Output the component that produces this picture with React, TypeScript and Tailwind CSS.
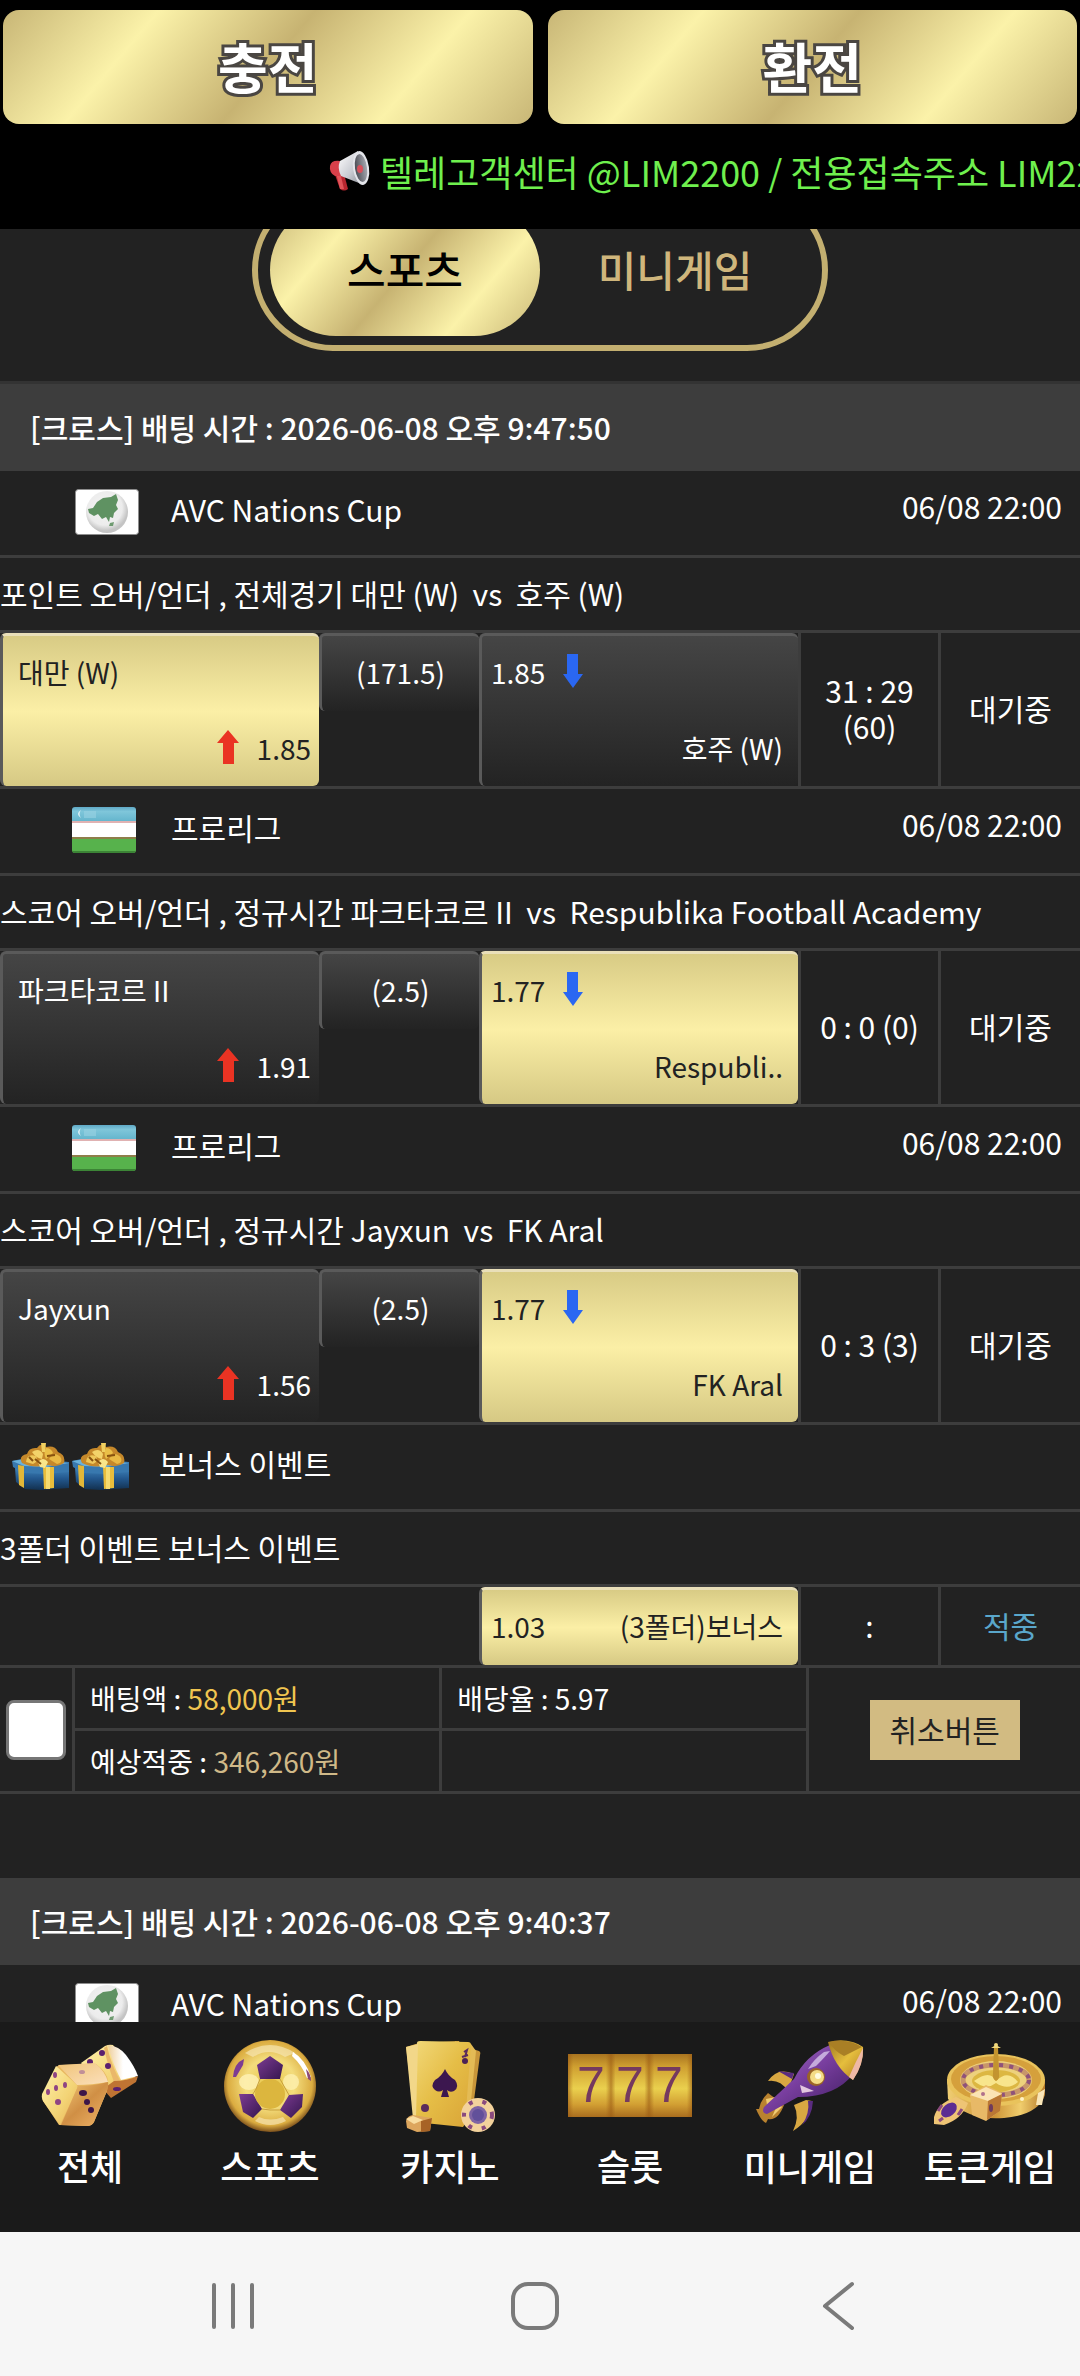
import type { ReactNode } from 'react';

const GOLD =
  'bg-[linear-gradient(130deg,#c8b676_0%,#fbf2a9_25%,#c7b372_50%,#fbf2a9_75%,#c8b676_100%)]';

function MegaphoneIcon() {
  return (
    <svg viewBox="0 0 44 42" className="h-[42px] w-11 shrink-0" aria-hidden="true">
      <defs>
        <linearGradient id="horn" x1="0" y1="0" x2="1" y2="1">
          <stop offset="0" stopColor="#ffffff" />
          <stop offset="0.55" stopColor="#c9cbd2" />
          <stop offset="1" stopColor="#85878f" />
        </linearGradient>
        <linearGradient id="bell" x1="0" y1="0" x2="1" y2="0">
          <stop offset="0" stopColor="#4c4d55" />
          <stop offset="1" stopColor="#a6a8b0" />
        </linearGradient>
      </defs>
      <path d="M6 22 L15 20 L20 39 Q16 42 12 39 Z" fill="#b8262f" />
      <path d="M8 23 L12 22 L16 39 L12 39 Z" fill="#e2545a" />
      <path d="M12 11 Q3 10 2 16 Q1 23 7 26 L13 26 Z" fill="#d8404a" />
      <path d="M12 11 L30 1 L36 35 L13 26 Q9 18 12 11 Z" fill="url(#horn)" />
      <ellipse cx="33" cy="18" rx="8" ry="17" transform="rotate(-8 33 18)" fill="#e4e5ea" />
      <ellipse cx="33" cy="18" rx="6" ry="14" transform="rotate(-8 33 18)" fill="url(#bell)" />
      <ellipse cx="32" cy="19" rx="3" ry="4" fill="#d9505b" />
    </svg>
  );
}

function AsiaFlag() {
  return (
    <svg viewBox="-3 0 67 46" className="h-[46px] w-[67px]" aria-hidden="true">
      <defs>
        <radialGradient id="globe" cx="0.45" cy="0.4" r="0.55">
          <stop offset="0" stopColor="#f4f4f4" />
          <stop offset="0.75" stopColor="#ececec" />
          <stop offset="1" stopColor="#c4c4c4" />
        </radialGradient>
      </defs>
      <rect x="0.500" y="0.500" width="63" height="45" rx="3" fill="#ffffff" stroke="#8d8d8d" />
      <circle cx="32" cy="23" r="21" fill="url(#globe)" />
      <path
        d="M13 20 L18 19 L22 13 L28 9 L36 8 L41 5 L43 11 L41 16 L43 20 L39 24 L38 29 L35 28 L34 33 L31 28 L27 30 L23 25 L19 27 L14 24 Z"
        fill="#5f9262"
      />
      <path d="M35 34 L39 33 L38 37 L34 37 Z" fill="#6f9b71" />
    </svg>
  );
}

function UzbekFlag() {
  return (
    <svg viewBox="0 0 64 47" className="h-[47px] w-16" aria-hidden="true">
      <defs>
        <linearGradient id="uzBlue" x1="0" y1="0" x2="0" y2="1">
          <stop offset="0" stopColor="#5fa9c6" />
          <stop offset="0.3" stopColor="#7fc6da" />
          <stop offset="1" stopColor="#62b4cc" />
        </linearGradient>
        <clipPath id="uzClip">
          <rect width="64" height="46" rx="3" />
        </clipPath>
      </defs>
      <g clipPath="url(#uzClip)">
        <rect width="64" height="15" fill="url(#uzBlue)" />
        <rect y="14" width="64" height="18" fill="#ffffff" />
        <rect y="14" width="64" height="2" fill="#e0b2b2" />
        <rect y="30" width="64" height="3" fill="#8f7d4a" />
        <rect y="32" width="64" height="14" fill="#57b24c" />
        <rect y="44" width="64" height="2" fill="#3c8436" />
        <path d="M9 3 Q3 7 9 11 Q6 7 9 3 Z" fill="#e6f4f8" />
        <rect x="12" y="4" width="12" height="7" fill="#9ad2e2" opacity="0.6" />
      </g>
    </svg>
  );
}

function GiftIcon() {
  return (
    <svg viewBox="0 0 58 48" className="h-12 w-[58px]" aria-hidden="true">
      <defs>
        <linearGradient id="giftBox" x1="0" y1="0" x2="0" y2="1">
          <stop offset="0" stopColor="#4287bd" />
          <stop offset="0.5" stopColor="#23588e" />
          <stop offset="1" stopColor="#12304f" />
        </linearGradient>
      </defs>
      <path d="M3 24 L12 28 L57 27 L57 45 L28 47 L13 46 L4 39 Z" fill="url(#giftBox)" />
      <path d="M0 18 L14 15 L57 19 L57 29 L34 31 L12 30 L1 24 Z" fill="#3878ae" />
      <path d="M0 18 L14 16 L57 20 L34 24 L12 23 Z" fill="#69b1dc" />
      <path d="M31 24 L42 24 L42 45 L32 46 Z" fill="#e8bd3c" />
      <path d="M34 24 L38 24 L38 46 L34 46 Z" fill="#f6dc70" />
      <path d="M6 22 L12 23 L12 45 L7 42 Z" fill="#e2b738" />
      <path
        d="M10 20 Q6 13 15 11 Q17 4 25 5 Q29 -1 34 4 Q43 2 46 9 Q54 12 52 20 Q45 25 36 22 Q22 26 10 20 Z"
        fill="#c5882a"
      />
      <path d="M14 19 Q15 10 24 13 Q27 18 21 21 Z" fill="#eec75a" />
      <path d="M20 9 Q27 4 31 11 L30 16 Q24 15 20 9 Z" fill="#f3d36a" />
      <path d="M34 5 Q31 10 34 16 L41 10 Q39 5 34 5 Z" fill="#eabf48" />
      <path d="M37 16 Q43 7 49 15 Q51 20 45 21 Z" fill="#e8b944" />
      <path d="M26 19 Q31 13 36 19 L33 25 L28 24 Z" fill="#fae68a" />
      <path d="M29 0 L34 0 L33 9 L30 9 Z" fill="#f0d060" />
      <path d="M23 16 L29 21 M35 13 L43 12 M17 14 L21 18" stroke="#87520f" strokeWidth="2" />
    </svg>
  );
}

function DiceIcon() {
  return (
    <svg viewBox="0 0 98 94" className="h-[94px] w-[98px]" aria-hidden="true">
      <defs>
        <linearGradient id="dieLeft" x1="0" y1="0" x2="1" y2="1">
          <stop offset="0" stopColor="#fff2ad" />
          <stop offset="0.6" stopColor="#f3d476" />
          <stop offset="1" stopColor="#e9b054" />
        </linearGradient>
        <linearGradient id="dieRight" x1="0" y1="0" x2="1" y2="1">
          <stop offset="0" stopColor="#f2c878" />
          <stop offset="0.5" stopColor="#d08f45" />
          <stop offset="1" stopColor="#f1b569" />
        </linearGradient>
        <linearGradient id="dieTop" x1="0" y1="0" x2="1" y2="1">
          <stop offset="0" stopColor="#f0c478" />
          <stop offset="1" stopColor="#fbe0bd" />
        </linearGradient>
        <linearGradient id="dieShine" x1="0" y1="0" x2="1" y2="0">
          <stop offset="0" stopColor="#efcf9c" />
          <stop offset="0.5" stopColor="#ffffff" />
        </linearGradient>
      </defs>
      <path d="M40 24 L64 7 Q68 5 72 6 L96 40 L72 56 L52 40 Z" fill="url(#dieLeft)" />
      <path d="M67 6 Q78 7 85 16 Q94 28 97 37 L80 41 Q71 24 67 6 Z" fill="url(#dieShine)" />
      <path d="M66 7 Q70 25 79 42 L73 43 Q66 24 63 9 Z" fill="#eab86a" />
      <path d="M73 42 Q86 42 97 37 L95 43 L70 59 L62 50 Z" fill="#bf7433" />
      <g fill="#5b1f6e">
        <circle cx="61" cy="14" r="3" />
        <circle cx="49" cy="23" r="3" />
        <circle cx="67" cy="27" r="3" />
        <ellipse cx="76" cy="50" rx="4" ry="2" />
      </g>
      <path d="M15 28 Q17 26 21 26 L55 25 Q66 33 67 42 L66 52 L53 83 Q51 87 46 87 L18 86 L2 62 Q0 58 2 55 Z" fill="#e8b860" />
      <path d="M15 27 L36 46 Q37 48 36 50 L19 86 L2 62 Q0 58 1 55 Z" fill="url(#dieLeft)" />
      <path d="M17 26 L54 24 Q64 32 67 43 Q50 46 36 46 Z" fill="url(#dieTop)" />
      <path d="M37 47 Q52 47 67 43 Q68 47 65 54 L53 83 Q51 87 46 87 L20 86 Z" fill="url(#dieRight)" />
      <g fill="#8f4583">
        <ellipse cx="14" cy="36" rx="2" ry="3" />
        <ellipse cx="24" cy="46" rx="2" ry="3" />
        <ellipse cx="15" cy="49" rx="2" ry="3" />
        <ellipse cx="7" cy="53" rx="2" ry="3" />
        <ellipse cx="17" cy="63" rx="3" ry="3" />
        <ellipse cx="41" cy="33" rx="3" ry="2" fill="#c08f98" />
      </g>
      <g fill="#3d1548">
        <ellipse cx="42" cy="54" rx="4" ry="3" />
        <ellipse cx="46" cy="63" rx="3" ry="3" />
        <ellipse cx="50" cy="71" rx="3" ry="3" />
      </g>
    </svg>
  );
}

function BallIcon() {
  return (
    <svg viewBox="0 0 94 94" className="h-[94px] w-[94px]" aria-hidden="true">
      <defs>
        <radialGradient id="ballBody" cx="0.5" cy="0.47" r="0.54">
          <stop offset="0" stopColor="#e8c648" />
          <stop offset="0.5" stopColor="#f3dc7c" />
          <stop offset="0.85" stopColor="#dbac40" />
          <stop offset="1" stopColor="#6d4217" />
        </radialGradient>
        <linearGradient id="patch" x1="0" y1="0" x2="1" y2="1">
          <stop offset="0" stopColor="#7d3c93" />
          <stop offset="1" stopColor="#35164f" />
        </linearGradient>
      </defs>
      <circle cx="47" cy="47" r="46" fill="url(#ballBody)" />
      <path d="M22 14 Q47 -2 72 14 L62 18 Q46 8 30 18 Z" fill="#f6e6b0" opacity="0.7" />
      <path d="M70 13 Q82 20 88 38 L84 39 Q79 26 69 17 Z" fill="#ffffff" />
      <ellipse cx="26" cy="43" rx="10" ry="8" fill="#fff3b8" opacity="0.8" />
      <ellipse cx="68" cy="43" rx="8" ry="8" fill="#fff3b8" opacity="0.7" />
      <path d="M47 17 L60 26 L57 40 L37 40 L34 26 Z" fill="url(#patch)" />
      <path d="M16 55 L30 55 L39 70 L30 79 L20 73 Z" fill="url(#patch)" />
      <path d="M66 56 L80 55 L79 68 L68 79 L57 71 Z" fill="url(#patch)" />
      <path d="M10 38 Q11 24 21 20 L20 26 L13 38 Z" fill="#7d3c93" />
      <path d="M83 30 Q88 35 88 42 L85 40 Z" fill="#8c4a76" />
      <circle cx="47" cy="55" r="15" fill="#dcb63e" />
      <g fill="none" stroke="#c79f3c" strokeWidth="1">
        <path d="M37 40 L33 50 L30 55 M57 40 L62 49 L66 56 M39 70 L47 71 L57 71" />
      </g>
      <path d="M32 82 Q47 90 63 82 L60 78 Q47 83 36 78 Z" fill="#f4dfa4" opacity="0.8" />
    </svg>
  );
}

function CardsIcon() {
  return (
    <svg viewBox="0 0 90 94" className="h-[94px] w-[90px]" aria-hidden="true">
      <defs>
        <linearGradient id="card" x1="0" y1="0" x2="1" y2="1">
          <stop offset="0" stopColor="#f2d97a" />
          <stop offset="0.5" stopColor="#e5bd46" />
          <stop offset="1" stopColor="#d9a437" />
        </linearGradient>
      </defs>
      <path d="M58 7 L74 12 Q76 13 75 16 L66 84 L50 82 Z" fill="#c8963a" />
      <path d="M50 2 L66 5 L71 12 L64 82 L44 80 Z" fill="#e4bb55" />
      <path d="M1 8 L14 4 L54 2 L62 84 L10 82 Z" fill="#d8aa45" />
      <path d="M12 4 Q12 2 15 2 L63 3 Q66 3 66 6 L60 85 L58 88 L10 83 L8 79 Z" fill="url(#card)" />
      <path d="M1 8 L13 5 L11 78 L8 80 Z" fill="#f2d789" />
      <path d="M40 30 Q43 37 50 41 Q55 48 49 52 Q45 54 42 51 L44 58 L36 58 L38 51 Q34 54 30 51 Q25 47 30 41 Q37 37 40 30 Z" fill="#3c174f" />
      <path d="M59 13 L62 11 L60 18 M57 18 L63 16" stroke="#5b2b5c" strokeWidth="2" fill="none" />
      <circle cx="60" cy="22" r="3" fill="#4c2155" />
      <circle cx="20" cy="69" r="4" fill="#5b2b5c" />
      <path d="M1 82 Q2 77 8 76 L27 79 L25 92 L12 93 L2 89 Z" fill="#dda65d" />
      <path d="M16 82 L27 79 L25 92 L16 93 Z" fill="#a76326" />
      <path d="M1 80 L8 77 L18 81 L9 85 Z" fill="#f9dda0" />
      <circle cx="73" cy="76" r="17" fill="#f3d29c" />
      <circle cx="73" cy="76" r="14" fill="none" stroke="#8a4a7e" strokeWidth="4" strokeDasharray="4 10" />
      <circle cx="73" cy="76" r="9" fill="#7f64a4" />
      <circle cx="73" cy="76" r="6" fill="#62509a" />
    </svg>
  );
}

function SlotsIcon() {
  return (
    <svg viewBox="0 0 124 94" className="h-[94px] w-[124px]" aria-hidden="true">
      <defs>
        <linearGradient id="reel" x1="0" y1="0" x2="0" y2="1">
          <stop offset="0" stopColor="#a97420" />
          <stop offset="0.2" stopColor="#cf9f30" />
          <stop offset="0.55" stopColor="#ead04e" />
          <stop offset="0.8" stopColor="#d29f33" />
          <stop offset="1" stopColor="#a96d1e" />
        </linearGradient>
        <linearGradient id="reelEdge" x1="0" y1="0" x2="1" y2="0">
          <stop offset="0" stopColor="#9a5a14" stopOpacity="0.6" />
          <stop offset="0.12" stopColor="#9a5a14" stopOpacity="0" />
          <stop offset="0.88" stopColor="#9a5a14" stopOpacity="0" />
          <stop offset="1" stopColor="#9a5a14" stopOpacity="0.6" />
        </linearGradient>
      </defs>
      <rect y="15" width="124" height="63" fill="url(#reel)" />
      <rect y="15" width="43" height="63" fill="url(#reelEdge)" />
      <rect x="43" y="15" width="38" height="63" fill="url(#reelEdge)" />
      <rect x="81" y="15" width="43" height="63" fill="url(#reelEdge)" />
      <g fontFamily="Liberation Sans, sans-serif" fontSize="50" fill="#75395f" textAnchor="middle">
        <text x="23" y="63">7</text>
        <text x="62" y="63">7</text>
        <text x="101" y="63">7</text>
      </g>
    </svg>
  );
}

function RocketIcon() {
  return (
    <svg viewBox="0 0 108 94" className="h-[94px] w-[108px]" aria-hidden="true">
      <defs>
        <linearGradient id="hull" x1="0" y1="0" x2="1" y2="1">
          <stop offset="0" stopColor="#a27bc9" />
          <stop offset="0.45" stopColor="#7a3fa0" />
          <stop offset="1" stopColor="#3a1a5c" />
        </linearGradient>
        <linearGradient id="nose" x1="0" y1="0" x2="1" y2="1">
          <stop offset="0" stopColor="#9c7420" />
          <stop offset="0.5" stopColor="#e5be3d" />
          <stop offset="1" stopColor="#b07a22" />
        </linearGradient>
      </defs>
      <path d="M12 42 Q20 30 32 33 L38 35 L32 52 Q24 40 12 42 Z" fill="#d9a842" />
      <path d="M22 32 L38 34 L36 40 Z" fill="#5a2c80" />
      <path d="M50 61 L56 62 Q56 80 37 92 Q44 78 38 66 Z" fill="#d9a842" />
      <path d="M52 62 L57 62 Q56 78 46 86 Q54 74 52 62 Z" fill="#5a2c80" />
      <path d="M12 54 Q4 62 3 70 L0 70 Q5 82 10 84 L12 80 Q22 82 28 66 Z" fill="#b9822f" />
      <path d="M10 60 L20 58 L12 72 Z M16 78 L26 68 L22 64 Z" fill="#f1cd74" />
      <path d="M74 6 Q50 16 38 40 L8 68 Q5 74 11 75 L42 58 Q80 58 98 34 Z" fill="url(#hull)" />
      <path d="M68 13 Q58 20 52 30 L60 27 Q69 18 74 12 Z" fill="#d7c4ea" opacity="0.8" />
      <path d="M44 46 L58 52 L46 54 Z" fill="#e2c7df" />
      <path d="M72 3 Q92 -2 107 8 Q108 24 97 41 Q78 28 72 3 Z" fill="url(#nose)" />
      <path d="M107 9 Q108 25 97 41 L93 38 Q99 24 107 9 Z" fill="#eeb8a6" />
      <path d="M73 3 Q92 -1 106 8 L88 17 Q78 12 73 3 Z" fill="#a97f25" />
      <circle cx="60" cy="38" r="9" fill="#9a6427" />
      <circle cx="61" cy="38" r="7" fill="#f4dc86" />
      <circle cx="62" cy="37" r="3" fill="#fffbe0" />
    </svg>
  );
}

function RouletteIcon() {
  return (
    <svg viewBox="0 0 112 94" className="h-[94px] w-28" aria-hidden="true">
      <defs>
        <linearGradient id="wheelSide" x1="0" y1="0" x2="1" y2="0">
          <stop offset="0" stopColor="#f0cf74" />
          <stop offset="0.45" stopColor="#c98d30" />
          <stop offset="0.75" stopColor="#f0cd6d" />
          <stop offset="1" stopColor="#b67a2a" />
        </linearGradient>
      </defs>
      <path d="M13 40 L14 60 Q34 82 70 79 Q104 76 111 56 L111 40 Z" fill="url(#wheelSide)" />
      <ellipse cx="62" cy="41" rx="49" ry="26" fill="#e9c35c" />
      <ellipse cx="62" cy="40" rx="45" ry="23" fill="#d5a03c" />
      <ellipse cx="62" cy="41" rx="36" ry="19" fill="#edd17d" />
      <ellipse cx="62" cy="41" rx="33" ry="15" fill="none" stroke="#c8966a" strokeWidth="5" />
      <ellipse cx="62" cy="41" rx="33" ry="15" fill="none" stroke="#8f527a" strokeWidth="4" strokeDasharray="4 6" />
      <ellipse cx="62" cy="42" rx="24" ry="11" fill="#dcb742" />
      <path d="M40 42 Q56 30 62 42 Q74 30 84 43 Q74 52 62 44 Q52 52 40 42 Z" fill="#f8e58c" />
      <path d="M60 8 L64 8 L65 34 Q66 40 62 42 Q58 40 59 34 Z" fill="#c3942f" />
      <path d="M57 9 L67 9 L62 6 Z" fill="#f1d87c" />
      <circle cx="62" cy="6" r="2" fill="#f1d87c" />
      <path d="M36 56 L52 46 L68 54 L66 72 L52 82 L38 76 Z" fill="#e8b967" />
      <path d="M36 56 L52 48 L68 55 L54 62 Z" fill="#fbe3b4" />
      <path d="M54 62 L68 55 L66 72 L53 81 Z" fill="#ba7734" />
      <ellipse cx="57" cy="69" rx="2" ry="4" fill="#6f3a5c" />
      <circle cx="49" cy="55" r="2" fill="#b0708c" />
      <path d="M0 78 Q4 64 22 58 L34 64 Q28 80 10 86 L0 85 Z" fill="#eec475" />
      <ellipse cx="15" cy="71" rx="9" ry="6" transform="rotate(-40 15 71)" fill="#5b2c92" />
      <path d="M4 72 L8 66 M24 76 L28 70 M5 82 L9 79" stroke="#8a4a7e" strokeWidth="3" />
      <path d="M104 54 L111 50 L108 66 L102 66 Z" fill="#f9e6b8" />
      <circle cx="88" cy="60" r="2" fill="#fff2c4" />
    </svg>
  );
}

function UpArrow() {
  return (
    <svg viewBox="0 0 22 34" className="h-[34px] w-[22px]" aria-hidden="true">
      <path d="M11 0 L22 13 L17 13 L17 34 L6 34 L6 13 L0 13 Z" fill="#ea3323" />
    </svg>
  );
}

function DownArrow() {
  return (
    <svg viewBox="0 0 20 34" className="h-[34px] w-5" aria-hidden="true">
      <path d="M4 0 L15 0 L15 20 L20 20 L10 34 L0 20 L4 20 Z" fill="#2a67f2" />
    </svg>
  );
}

const TONE = {
  gold: 'border-t-[#e9dfb9] bg-[linear-gradient(180deg,#d8cb85_0%,#fbefa6_50%,#d6c984_100%)] text-[#222]',
  dark: 'border-t-[#5a5a5a] bg-[linear-gradient(180deg,#454545_0%,#232323_100%)] text-white',
};

type Tone = keyof typeof TONE;

function Option({ tone, className, children }: { tone: Tone; className: string; children: ReactNode }) {
  return (
    <div
      className={`flex rounded-md border-t-[3px] border-l-[3px] border-l-[#5a5a5a] text-[28px] leading-9 ${TONE[tone]} ${className}`}
    >
      {children}
    </div>
  );
}

const GRID = 'grid grid-cols-[319fr_160fr_322fr_140fr_139fr] border-b-[3px] border-[#3d3d3d]';
const CELL = 'flex items-center justify-center pb-[3px] text-center leading-9';

function TicketHeader({ time, topLine }: { time: string; topLine?: boolean }) {
  return (
    <h2
      className={`bg-[#3d3d3d] px-[30px] pt-[25px] pb-[26px] text-[30px] leading-9 font-medium ${
        topLine ? 'border-t-[3px] border-[#333]' : ''
      }`}
    >
      [크로스] 배팅 시간 : {time}
    </h2>
  );
}

function LeagueRow({ icon, name, date }: { icon: ReactNode; name: string; date: string }) {
  return (
    <div className="flex h-[87px] items-start border-b-[3px] border-[#3d3d3d] pt-[18px] pr-[18px]">
      <span className="flex w-[171px] justify-start pl-[72px]">{icon}</span>
      <span className="flex-1 pt-[3px] leading-[34px]">{name}</span>
      <time className="leading-[34px]">{date}</time>
    </div>
  );
}

function MatchTitle({ children }: { children: ReactNode }) {
  return <p className="border-b-[3px] border-[#3d3d3d] pt-[17px] pb-[19px] leading-9">{children}</p>;
}

interface Match {
  league: string;
  flag: 'asia' | 'uz';
  title: string;
  home: string;
  homeOdds: string;
  line: string;
  away: string;
  awayOdds: string;
  picked: 'home' | 'away';
  score: string;
}

const MATCHES: Match[] = [
  {
    league: 'AVC Nations Cup',
    flag: 'asia',
    title: '포인트 오버/언더 , 전체경기 대만 (W)\u00a0 vs\u00a0 호주 (W)',
    home: '대만 (W)',
    homeOdds: '1.85',
    line: '(171.5)',
    away: '호주 (W)',
    awayOdds: '1.85',
    picked: 'home',
    score: '31 : 29 (60)',
  },
  {
    league: '프로리그',
    flag: 'uz',
    title: '스코어 오버/언더 , 정규시간 파크타코르 II\u00a0 vs\u00a0 Respublika Football Academy',
    home: '파크타코르 II',
    homeOdds: '1.91',
    line: '(2.5)',
    away: 'Respubli..',
    awayOdds: '1.77',
    picked: 'away',
    score: '0 : 0 (0)',
  },
  {
    league: '프로리그',
    flag: 'uz',
    title: '스코어 오버/언더 , 정규시간 Jayxun\u00a0 vs\u00a0 FK Aral',
    home: 'Jayxun',
    homeOdds: '1.56',
    line: '(2.5)',
    away: 'FK Aral',
    awayOdds: '1.77',
    picked: 'away',
    score: '0 : 3 (3)',
  },
];

function MatchBlock({ match }: { match: Match }) {
  return (
    <article>
      <LeagueRow
        icon={match.flag === 'asia' ? <AsiaFlag /> : <UzbekFlag />}
        name={match.league}
        date="06/08 22:00"
      />
      <MatchTitle>{match.title}</MatchTitle>
      <div className={GRID}>
        <Option
          tone={match.picked === 'home' ? 'gold' : 'dark'}
          className="h-[153px] flex-col justify-between pt-[18px] pr-2 pb-5 pl-[15px]"
        >
          <span>{match.home}</span>
          <span className="flex items-start justify-end gap-[18px]">
            <UpArrow />
            {match.homeOdds}
          </span>
        </Option>
        <Option tone="dark" className="h-[78px] justify-center pt-[18px]">
          {match.line}
        </Option>
        <div className="border-r-[3px] border-[#3d3d3d]">
          <Option
            tone={match.picked === 'away' ? 'gold' : 'dark'}
            className="h-[153px] flex-col justify-between pt-[18px] pr-[15px] pb-5 pl-[9px]"
          >
            <span className="flex items-start gap-[18px]">
              {match.awayOdds}
              <DownArrow />
            </span>
            <span className="text-right">{match.away}</span>
          </Option>
        </div>
        <span className={`${CELL} border-r-[3px] border-[#3d3d3d] px-3`}>{match.score}</span>
        <span className={CELL}>대기중</span>
      </div>
    </article>
  );
}

function BonusBlock() {
  return (
    <article>
      <div className="flex h-[87px] items-start gap-[2px] border-b-[3px] border-[#3d3d3d] pt-[18px] pl-3">
        <GiftIcon />
        <GiftIcon />
        <span className="pt-[3px] pl-[27px] leading-[34px]">보너스 이벤트</span>
      </div>
      <MatchTitle>3폴더 이벤트 보너스 이벤트</MatchTitle>
      <div className={GRID}>
        <span className="col-span-2" />
        <div className="border-r-[3px] border-[#3d3d3d]">
          <Option tone="gold" className="h-[78px] justify-between pt-[18px] pr-[15px] pl-[9px]">
            <span>1.03</span>
            <span>(3폴더)보너스</span>
          </Option>
        </div>
        <span className={`${CELL} border-r-[3px] border-[#3d3d3d]`}>:</span>
        <span className={`${CELL} text-[#5aa7cb]`}>적중</span>
      </div>
    </article>
  );
}

function TicketSummary() {
  const cell = 'h-[63px] border-r-[3px] border-b-[3px] border-[#3d3d3d] px-[15px] py-0 text-left font-normal';
  return (
    <table className="w-full table-fixed border-separate border-spacing-0 text-[28px] leading-9">
      <colgroup>
        <col className="w-[75px]" />
        <col className="w-[34%]" />
        <col className="w-[34%]" />
        <col />
      </colgroup>
      <tbody>
        <tr>
          <td rowSpan={2} className="border-r-[3px] border-b-[3px] border-[#3d3d3d] p-0 text-center align-middle">
            <input
              type="checkbox"
              aria-label="배팅 선택"
              className="inline-block size-[60px] appearance-none rounded-lg border-[3px] border-[#767676] bg-white align-middle"
            />
          </td>
          <td className={cell}>
            배팅액 : <span className="text-[#f0c550]">58,000원</span>
          </td>
          <td className={cell}>배당율 : 5.97</td>
          <td rowSpan={2} className="border-b-[3px] border-[#3d3d3d] p-0 text-center align-middle">
            <button type="button" className="h-[60px] w-[150px] bg-[#d2bb82] pb-[2px] align-middle text-[30px] text-[#222]">
              취소버튼
            </button>
          </td>
        </tr>
        <tr>
          <td className={cell}>
            예상적중 : <span className="text-[#d0b988]">346,260원</span>
          </td>
          <td className={cell} />
        </tr>
      </tbody>
    </table>
  );
}

const NAV: { label: string; icon: ReactNode }[] = [
  { label: '전체', icon: <DiceIcon /> },
  { label: '스포츠', icon: <BallIcon /> },
  { label: '카지노', icon: <CardsIcon /> },
  { label: '슬롯', icon: <SlotsIcon /> },
  { label: '미니게임', icon: <RocketIcon /> },
  { label: '토큰게임', icon: <RouletteIcon /> },
];

export default function App() {
  return (
    <div className="flex h-screen flex-col overflow-hidden bg-[#222] font-['Noto_Sans_CJK_KR',sans-serif] text-[30px] text-white">
      <header className="shrink-0 bg-black">
        <div className="grid grid-cols-2 gap-[15px] px-[3px] pt-[10px]">
          {['충전', '환전'].map((label) => (
            <button
              key={label}
              type="button"
              className={`h-[114px] rounded-2xl pb-1 text-[54px] font-bold text-white [-webkit-text-stroke:6px_#4a4642] [paint-order:stroke_fill] ${GOLD}`}
            >
              {label}
            </button>
          ))}
        </div>
        <div className="flex h-[105px] items-center gap-2 overflow-hidden pb-3 pl-[328px] text-4xl whitespace-nowrap text-[#6ff04e]">
          <MegaphoneIcon />
          <span>텔레고객센터 @LIM2200 / 전용접속주소 LIM2200</span>
        </div>
      </header>

      <main className="min-h-0 flex-1 overflow-hidden">
        <div className="-mt-10 mb-[30px] flex justify-center">
          <div role="tablist" className="grid h-[162px] w-[576px] grid-cols-2 rounded-full border-[6px] border-[#c3af70] px-3 py-[9px] text-[42px] font-medium">
            <button type="button" role="tab" aria-selected="true" className={`rounded-full pb-1 text-black ${GOLD}`}>
              스포츠
            </button>
            <button type="button" role="tab" aria-selected="false" className="rounded-full pb-1 text-[#cfb67c]">
              미니게임
            </button>
          </div>
        </div>

        <section className="mb-[84px]">
          <TicketHeader time="2026-06-08 오후 9:47:50" topLine />
          {MATCHES.map((match) => (
            <MatchBlock key={match.title} match={match} />
          ))}
          <BonusBlock />
          <TicketSummary />
        </section>

        <section>
          <TicketHeader time="2026-06-08 오후 9:40:37" />
          <LeagueRow icon={<AsiaFlag />} name="AVC Nations Cup" date="06/08 22:00" />
        </section>
      </main>

      <nav className="grid h-[210px] shrink-0 grid-cols-6 bg-[#1a1a1a] pt-[17px]">
        {NAV.map((item) => (
          <a key={item.label} href="#" className="flex flex-col items-center gap-[5px] text-4xl font-medium">
            {item.icon}
            <span className="leading-[54px] whitespace-nowrap">{item.label}</span>
          </a>
        ))}
      </nav>

      <footer className="flex h-36 shrink-0 items-center justify-center gap-[253px] bg-[#f6f6f6] pt-1 pr-2 text-[#7a7a7a]">
        <button type="button" aria-label="최근 앱">
          <svg viewBox="0 0 48 50" className="h-[50px] w-12" fill="none" stroke="currentColor" strokeWidth="4" strokeLinecap="round" aria-hidden="true">
            <path d="M5 4 V46 M24 4 V46 M43 4 V46" />
          </svg>
        </button>
        <button type="button" aria-label="홈">
          <svg viewBox="0 0 50 50" className="size-[50px]" fill="none" stroke="currentColor" strokeWidth="4" aria-hidden="true">
            <rect x="3" y="3" width="44" height="44" rx="15" />
          </svg>
        </button>
        <button type="button" aria-label="뒤로">
          <svg viewBox="0 0 50 50" className="size-[50px]" fill="none" stroke="currentColor" strokeWidth="4" strokeLinecap="round" strokeLinejoin="round" aria-hidden="true">
            <path d="M39 3 L12 25 L39 47" />
          </svg>
        </button>
      </footer>
    </div>
  );
}
